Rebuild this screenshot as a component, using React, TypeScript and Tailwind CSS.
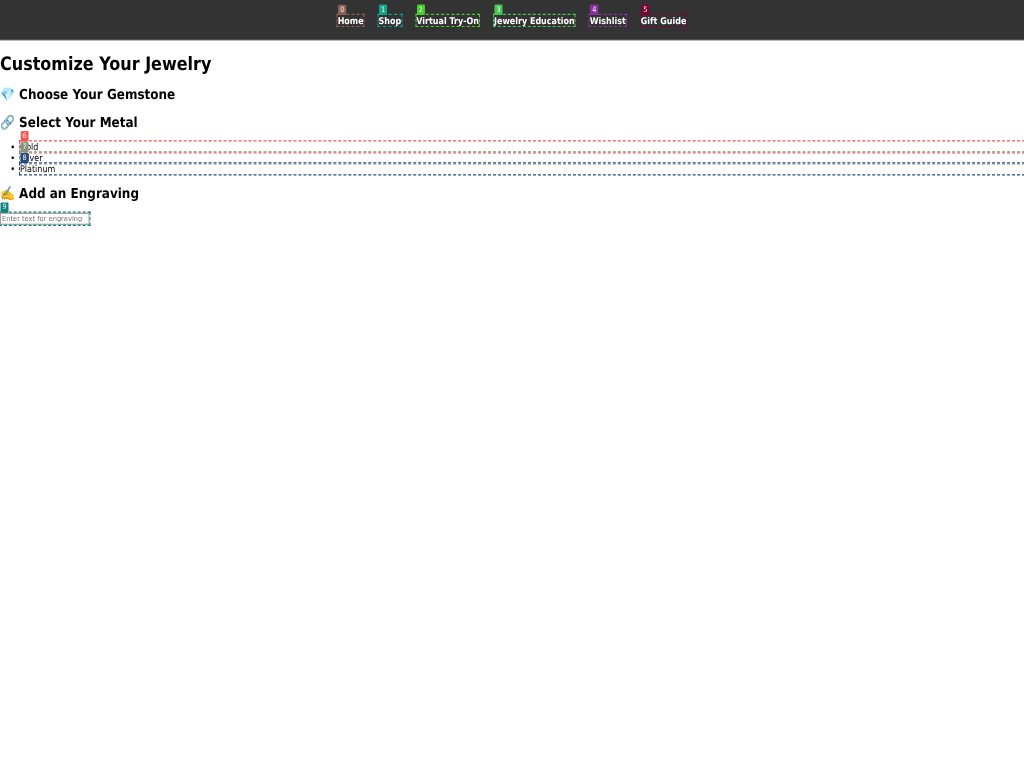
const links = [
  { label: 'Home', outline: 'outline-[#8d6055]', bg: 'bg-[#8d6055]' },
  { label: 'Shop', outline: 'outline-[#0fa68a]', bg: 'bg-[#0fa68a]' },
  { label: 'Virtual Try-On', outline: 'outline-[#46cc2c]', bg: 'bg-[#46cc2c]' },
  { label: 'Jewelry Education', outline: 'outline-[#45c653]', bg: 'bg-[#45c653]' },
  { label: 'Wishlist', outline: 'outline-[#8633a0]', bg: 'bg-[#8633a0]' },
  { label: 'Gift Guide', outline: 'outline-[#7a0536]', bg: 'bg-[#7a0536]' },
];

const metals = [
  { label: 'Gold', outline: 'outline-[#f05550]', bg: 'bg-[#f05550]' },
  { label: 'Silver', outline: 'outline-[#84957b]', bg: 'bg-[#84957b]' },
  { label: 'Platinum', outline: 'outline-[#254880]', bg: 'bg-[#254880]' },
];

function Badge({ n, bg }: { n: number; bg: string }) {
  return (
    <span className={`absolute bottom-full left-[1px] z-10 rounded-[2px] px-[4px] py-[2px] text-[13px] font-normal leading-[14px] text-white/90 ${bg}`}>
      {n}
    </span>
  );
}

export default function App() {
  return (
    <div className="h-[768px] w-[1024px] overflow-hidden bg-white">
      <div className="w-[2048px] origin-top-left transform-[scale(0.5,0.575)] font-['DejaVu_Sans','Noto_Color_Emoji',sans-serif] text-[16px] leading-[19px] text-black [text-rendering:geometricPrecision]">
        <nav className="flex h-[70px] items-start justify-center gap-[30px] border-b border-[#888] bg-[#333] pt-[26px]">
          {links.map((l, i) => (
            <a key={l.label} className={`relative whitespace-nowrap font-bold text-white outline-2 outline-dashed ${l.outline}`}>
              {l.label}
              <Badge n={i} bg={l.bg} />
            </a>
          ))}
        </nav>
        <main className="pt-[22px]">
          <h1 className="mb-[21px] text-[32px] font-bold leading-[37px]">Customize Your Jewelry</h1>
          <h2 className="mb-[20px] text-[24px] font-bold leading-[28px]">💎 Choose Your Gemstone</h2>
          <h2 className="mb-[20px] text-[24px] font-bold leading-[28px]">🔗 Select Your Metal</h2>
          <ul className="mb-[20px] list-disc pl-[40px]">
            {metals.map((m, i) => (
              <li key={m.label} className={`relative outline-2 outline-dashed ${m.outline}`}>
                {m.label}
                <Badge n={i + 6} bg={m.bg} />
              </li>
            ))}
          </ul>
          <h2 className="mb-[19px] text-[24px] font-bold leading-[28px]">✍️ Add an Engraving</h2>
          <div className="relative w-[178.5px]">
            <input
              className="block h-[21px] w-full border-2 border-[#a0a0a0] bg-white px-[2px] py-px text-[13.333px] leading-[15px] outline-2 outline-dashed outline-[#10807d] placeholder:text-[#757575]"
              placeholder="Enter text for engraving"
            />
            <Badge n={9} bg="bg-[#10807d]" />
          </div>
        </main>
      </div>
    </div>
  );
}
